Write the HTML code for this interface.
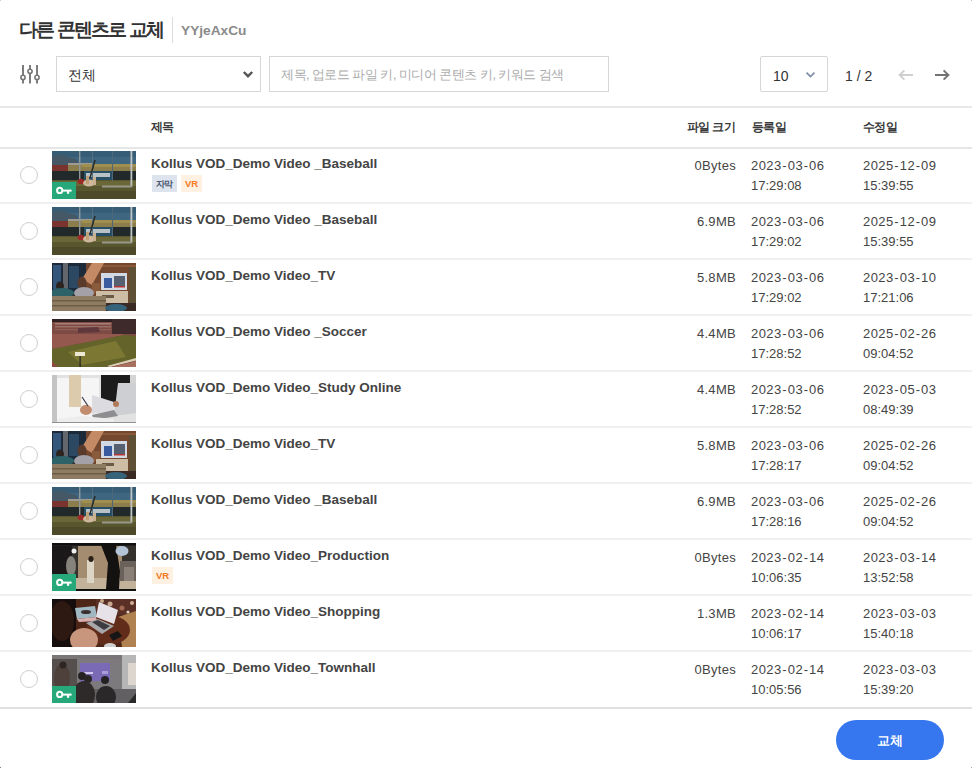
<!DOCTYPE html>
<html><head><meta charset="utf-8">
<style>
*{box-sizing:border-box;margin:0;padding:0}
html,body{width:972px;height:768px;overflow:hidden;background:#fff;font-family:"Liberation Sans",sans-serif;color:#333}
.a{position:absolute;white-space:nowrap}
.box{position:absolute;border:1px solid #dadada;background:#fff;border-radius:2px}
.hl{position:absolute;left:0;width:972px}
.th{position:absolute;top:120px;font-size:12px;line-height:14px;font-weight:bold;color:#3a3a3a;letter-spacing:-0.6px;white-space:nowrap}
.radio{position:absolute;left:20px;width:18px;height:18px;border:1px solid #cfcfcf;border-radius:50%}
.thumb{position:absolute;left:52px;width:84px;height:48px;overflow:hidden}
.thumb svg.ph{display:block;filter:blur(0.6px)}
.key{position:absolute;left:0;top:31px;width:24px;height:17px;background:#27a87a}
.ttl{position:absolute;left:151px;font-size:13.5px;line-height:16px;font-weight:bold;color:#444;white-space:nowrap}
.bd{position:absolute;top:26px;height:16.5px;font-size:9.5px;font-weight:bold;line-height:17px;text-align:center}
.bsub{left:152px;width:25px;background:#dde4ee;color:#4c5870;font-size:9px;line-height:18px;letter-spacing:-1px;text-indent:-1px}
.bvr{width:21px;background:#fff1e2;color:#f57a1e;font-size:9.5px;line-height:18px}
.sz{position:absolute;left:636px;width:100px;text-align:right;letter-spacing:0.3px;font-size:13px;line-height:20px;color:#444}
.dt{position:absolute;font-size:13px;line-height:20px;color:#444;white-space:nowrap}
.dt i{font-style:normal;padding:0 0.6px}
.dt b{font-weight:normal;letter-spacing:0.45px}
.rb{position:absolute;left:0;width:972px;height:2px;background:#f0f0f0}
</style></head>
<body>


<div class="a" style="left:19px;top:19px;font-size:19px;line-height:22px;font-weight:bold;color:#333;letter-spacing:-1.8px">다른 콘텐츠로 교체</div>
<div class="a" style="left:172px;top:17px;width:1px;height:26px;background:#dcdcdc"></div>
<div class="a" style="left:181px;top:22.5px;font-size:13.7px;line-height:16px;font-weight:bold;color:#8a8a8a">YYjeAxCu</div>

<svg class="a" style="left:20px;top:64px" width="22" height="21" viewBox="0 0 22 21">
 <g stroke="#777" fill="#fff">
  <line x1="3" y1="1" x2="3" y2="19.5" stroke-width="1.9"/><line x1="10" y1="1" x2="10" y2="19.5" stroke-width="1.9"/><line x1="17" y1="1" x2="17" y2="19.5" stroke-width="1.9"/>
  <circle cx="3" cy="13.4" r="2.1" stroke-width="1.6"/><circle cx="10" cy="7.3" r="2.1" stroke-width="1.6"/><circle cx="17" cy="13.4" r="2.1" stroke-width="1.6"/>
 </g>
</svg>
<div class="box" style="left:56px;top:56px;width:205px;height:36px;border-radius:0;border-color:#d6d6d6"></div>
<div class="a" style="left:68px;top:68px;font-size:13.5px;line-height:16px;color:#333">전체</div>
<svg class="a" style="left:242px;top:70px" width="12" height="9" viewBox="0 0 12 9"><path d="M1.8 2 L6 6.2 L10.2 2" stroke="#555" stroke-width="2.4" fill="none"/></svg>

<div class="box" style="left:269px;top:56px;width:340px;height:36px;border-radius:0;border-color:#d6d6d6"></div>
<div class="a" style="left:281px;top:67.5px;font-size:12.6px;line-height:14px;color:#aaa;letter-spacing:-0.5px">제목, 업로드 파일 키, 미디어 콘텐츠 키, 키워드 검색</div>

<div class="box" style="left:760px;top:56px;width:68px;height:36px;border-color:#d6d6d6"></div>
<div class="a" style="left:773px;top:67.5px;font-size:14px;line-height:16px;color:#333">10</div>
<svg class="a" style="left:805px;top:70px" width="11" height="9" viewBox="0 0 11 9"><path d="M1.5 2.6 L5.5 6.6 L9.5 2.6" stroke="#8090a6" stroke-width="1.8" fill="none"/></svg>
<div class="a" style="left:845px;top:68px;font-size:14px;line-height:16px;color:#333">1 / 2</div>
<svg class="a" style="left:897px;top:67.5px" width="18" height="14" viewBox="0 0 18 14"><path d="M16 7 H2.6 M7.4 2.4 L2.6 7 L7.4 11.6" stroke="#cfcfcf" stroke-width="1.9" fill="none"/></svg>
<svg class="a" style="left:933px;top:67.5px" width="18" height="14" viewBox="0 0 18 14"><path d="M2 7 H15.4 M10.6 2.4 L15.4 7 L10.6 11.6" stroke="#727272" stroke-width="1.9" fill="none"/></svg>

<div class="hl" style="top:106px;height:2px;background:#e8e8e8"></div>

<div class="th" style="left:151px">제목</div>
<div class="th" style="left:635px;width:100px;text-align:right">파일 크기</div>
<div class="th" style="left:752px">등록일</div>
<div class="th" style="left:863px">수정일</div>
<div class="hl" style="top:147px;height:2px;background:#e6e6e6"></div>

<div class="a" style="left:0;top:149px;width:972px;height:56px">
<div class="radio" style="top:17px"></div>
<div class="thumb" style="top:2px"><svg class="ph" width="84" height="48" viewBox="0 0 84 48">
<rect width="84" height="48" fill="#3f6680"/>
<rect y="0" width="84" height="6" fill="#375c76"/>
<polygon points="0,5 8,4 24,8 28,14 0,14" fill="#465866"/>
<rect x="0" y="14" width="16" height="7" fill="#7a3430"/>
<rect x="16" y="12" width="26" height="3" fill="#9c9c94"/>
<rect x="16" y="14" width="68" height="7" fill="#8c7e4c"/>
<rect x="30" y="13" width="54" height="3" fill="#a09050"/>
<rect x="0" y="20" width="84" height="10" fill="#22292a"/>
<rect x="32" y="20" width="28" height="9" fill="#274f66"/>
<rect x="34" y="22" width="24" height="4" fill="#b8c2c6"/>
<rect x="0" y="29" width="84" height="19" fill="#57562e"/>
<rect x="0" y="30" width="84" height="5" fill="#6a6838"/>
<rect x="0" y="40" width="84" height="8" fill="#4c4a28"/>
<rect x="78.5" y="0" width="1.8" height="36" fill="#c0c4c4"/>
<rect x="27" y="0" width="1.4" height="30" fill="#8e9898"/>
<rect x="40" y="0" width="1" height="30" fill="#567080"/>
<rect x="60" y="0" width="1" height="30" fill="#4e6878"/>
<rect x="50" y="34.5" width="30" height="2" fill="#98988c"/>
<line x1="43" y1="9" x2="38" y2="27" stroke="#2a2a2a" stroke-width="1.5"/>
<ellipse cx="29" cy="30.5" rx="3.4" ry="2.8" fill="#9a2c28"/>
<ellipse cx="37" cy="32" rx="6" ry="3.5" fill="#cdb89c"/>
<rect x="34" y="25" width="3" height="8" fill="#c0a078"/>
<rect x="41" y="26" width="3" height="8" fill="#c8b090"/>
</svg><div class="key"><svg width="24" height="17" viewBox="0 0 24 17" style="position:absolute;left:0;top:0"><circle cx="7.7" cy="8.4" r="2.6" fill="none" stroke="#fff" stroke-width="2"/><rect x="10" y="7.6" width="9.6" height="2" fill="#fff"/><rect x="15" y="8" width="2.2" height="3.8" fill="#fff"/></svg></div></div>
<div class="ttl" style="top:7px">Kollus VOD_Demo Video _Baseball</div>
<div class="bd bsub">자막</div>
<div class="bd bvr" style="left:181px">VR</div>
<div class="sz" style="top:7px">0Bytes</div>
<div class="dt" style="left:751px;top:7px"><b>2023<i>-</i>03<i>-</i>06</b><br>17:29:08</div>
<div class="dt" style="left:863px;top:7px"><b>2025<i>-</i>12<i>-</i>09</b><br>15:39:55</div>
</div>
<div class="rb" style="top:202px"></div>
<div class="a" style="left:0;top:205px;width:972px;height:56px">
<div class="radio" style="top:17px"></div>
<div class="thumb" style="top:2px"><svg class="ph" width="84" height="48" viewBox="0 0 84 48">
<rect width="84" height="48" fill="#3f6680"/>
<rect y="0" width="84" height="6" fill="#375c76"/>
<polygon points="0,5 8,4 24,8 28,14 0,14" fill="#465866"/>
<rect x="0" y="14" width="16" height="7" fill="#7a3430"/>
<rect x="16" y="12" width="26" height="3" fill="#9c9c94"/>
<rect x="16" y="14" width="68" height="7" fill="#8c7e4c"/>
<rect x="30" y="13" width="54" height="3" fill="#a09050"/>
<rect x="0" y="20" width="84" height="10" fill="#22292a"/>
<rect x="32" y="20" width="28" height="9" fill="#274f66"/>
<rect x="34" y="22" width="24" height="4" fill="#b8c2c6"/>
<rect x="0" y="29" width="84" height="19" fill="#57562e"/>
<rect x="0" y="30" width="84" height="5" fill="#6a6838"/>
<rect x="0" y="40" width="84" height="8" fill="#4c4a28"/>
<rect x="78.5" y="0" width="1.8" height="36" fill="#c0c4c4"/>
<rect x="27" y="0" width="1.4" height="30" fill="#8e9898"/>
<rect x="40" y="0" width="1" height="30" fill="#567080"/>
<rect x="60" y="0" width="1" height="30" fill="#4e6878"/>
<rect x="50" y="34.5" width="30" height="2" fill="#98988c"/>
<line x1="43" y1="9" x2="38" y2="27" stroke="#2a2a2a" stroke-width="1.5"/>
<ellipse cx="29" cy="30.5" rx="3.4" ry="2.8" fill="#9a2c28"/>
<ellipse cx="37" cy="32" rx="6" ry="3.5" fill="#cdb89c"/>
<rect x="34" y="25" width="3" height="8" fill="#c0a078"/>
<rect x="41" y="26" width="3" height="8" fill="#c8b090"/>
</svg></div>
<div class="ttl" style="top:7px">Kollus VOD_Demo Video _Baseball</div>
<div class="sz" style="top:7px">6.9MB</div>
<div class="dt" style="left:751px;top:7px"><b>2023<i>-</i>03<i>-</i>06</b><br>17:29:02</div>
<div class="dt" style="left:863px;top:7px"><b>2025<i>-</i>12<i>-</i>09</b><br>15:39:55</div>
</div>
<div class="rb" style="top:258px"></div>
<div class="a" style="left:0;top:261px;width:972px;height:56px">
<div class="radio" style="top:17px"></div>
<div class="thumb" style="top:2px"><svg class="ph" width="84" height="48" viewBox="0 0 84 48">
<rect width="84" height="48" fill="#3a2a24"/>
<rect x="0" y="0" width="36" height="32" fill="#1c2a3a"/>
<rect x="1" y="2" width="8" height="24" fill="#34567a"/>
<rect x="17" y="3" width="10" height="22" fill="#2c4862"/>
<rect x="11" y="0" width="5" height="30" fill="#64666e"/>
<rect x="34" y="0" width="50" height="40" fill="#74482e"/>
<rect x="40" y="2" width="44" height="2" fill="#8a5a38"/>
<polygon points="30,16 40,0 52,0 40,22" fill="#c48a66"/>
<rect x="40" y="20" width="8" height="10" fill="#8a5a3c"/>
<rect x="77" y="4" width="7" height="36" fill="#5e5034"/>
<rect x="49" y="10" width="26" height="17" fill="#d2d8e4"/>
<rect x="52" y="15" width="8" height="10" fill="#3a5aa0"/>
<rect x="62" y="13" width="11" height="10" fill="#566070"/>
<rect x="62" y="23" width="11" height="1.5" fill="#b83434"/>
<rect x="44" y="28" width="32" height="12" fill="#cdbda4"/>
<rect x="50" y="32" width="12" height="3" fill="#6a5a48"/>
<ellipse cx="8" cy="23" rx="4" ry="4.5" fill="#2c2420"/>
<ellipse cx="10" cy="30" rx="12" ry="5" fill="#2c6268"/>
<ellipse cx="30" cy="20" rx="4.5" ry="6.5" fill="#5a3a2a"/>
<ellipse cx="32" cy="30" rx="10" ry="6" fill="#a4a2a8"/>
<rect x="0" y="33" width="54" height="15" fill="#8e7c62"/>
<rect x="0" y="37" width="54" height="1.5" fill="#6e5c46"/>
<rect x="0" y="42" width="54" height="1.5" fill="#6e5c46"/>
<ellipse cx="64" cy="45" rx="11" ry="4" fill="#36627a"/>
</svg></div>
<div class="ttl" style="top:7px">Kollus VOD_Demo Video_TV</div>
<div class="sz" style="top:7px">5.8MB</div>
<div class="dt" style="left:751px;top:7px"><b>2023<i>-</i>03<i>-</i>06</b><br>17:29:02</div>
<div class="dt" style="left:863px;top:7px"><b>2023<i>-</i>03<i>-</i>10</b><br>17:21:06</div>
</div>
<div class="rb" style="top:314px"></div>
<div class="a" style="left:0;top:317px;width:972px;height:56px">
<div class="radio" style="top:17px"></div>
<div class="thumb" style="top:2px"><svg class="ph" width="84" height="48" viewBox="0 0 84 48">
<rect width="84" height="48" fill="#7e4a44"/>
<rect x="0" y="0" width="84" height="3" fill="#2e2020"/>
<rect x="3" y="4" width="56" height="1.5" fill="#a88078"/>
<rect x="3" y="7" width="56" height="1.5" fill="#9a6e64"/>
<rect x="3" y="10" width="56" height="1.2" fill="#8e625a"/>
<rect x="60" y="0" width="24" height="15" fill="#3e2a2a"/>
<polygon points="26,9 46,8 48,13 26,14" fill="#5e383c"/>
<polygon points="0,15 70,15 72,16 0,30" fill="#94584e"/>
<polygon points="0,30 72,16 84,17 84,40 55,48 0,48" fill="#64642a"/>
<polygon points="16,33 64,22 74,38 30,46" fill="#7c7834"/>
<polygon points="0,42 6,48 0,48" fill="#8a4a40"/>
<rect x="23" y="33" width="10" height="4" fill="#ece8d4"/>
<rect x="27.5" y="37" width="1.2" height="11" fill="#222"/>
<polygon points="55,47 84,39 84,41.5 58,48" fill="#ddd2b8"/>
<polygon points="60,48 84,42 84,48" fill="#a8705e"/>
</svg></div>
<div class="ttl" style="top:7px">Kollus VOD_Demo Video _Soccer</div>
<div class="sz" style="top:7px">4.4MB</div>
<div class="dt" style="left:751px;top:7px"><b>2023<i>-</i>03<i>-</i>06</b><br>17:28:52</div>
<div class="dt" style="left:863px;top:7px"><b>2025<i>-</i>02<i>-</i>26</b><br>09:04:52</div>
</div>
<div class="rb" style="top:370px"></div>
<div class="a" style="left:0;top:373px;width:972px;height:56px">
<div class="radio" style="top:17px"></div>
<div class="thumb" style="top:2px"><svg class="ph" width="84" height="48" viewBox="0 0 84 48">
<rect width="84" height="48" fill="#e2e2e2"/>
<rect x="0" y="0" width="5" height="48" fill="#c4c4c4"/>
<rect x="5" y="3" width="42" height="45" fill="#f5f5f6"/>
<rect x="17" y="0" width="12" height="32" fill="#ddcbae"/>
<rect x="49" y="0" width="29" height="27" fill="#1c1c1c"/>
<rect x="78" y="0" width="6" height="12" fill="#d4d4d4"/>
<polygon points="40,20 62,27 62,36 40,39" fill="#dcdce0"/>
<polygon points="66,8 84,8 84,38 62,41" fill="#cdcfd2"/>
<polygon points="40,40 62,35 66,41 42,45" fill="#8e8e90"/>
<ellipse cx="34" cy="35" rx="6" ry="5" fill="#c28c6e"/>
<ellipse cx="64" cy="29" rx="3" ry="3" fill="#b07a5a"/>
<line x1="30" y1="22" x2="36" y2="31" stroke="#3a3a48" stroke-width="1.2"/>
<polygon points="5,44 30,41 62,44 62,48 5,48" fill="#ededee"/>
<rect x="0" y="47" width="84" height="1" fill="#909090"/>
</svg></div>
<div class="ttl" style="top:7px">Kollus VOD_Demo Video_Study Online</div>
<div class="sz" style="top:7px">4.4MB</div>
<div class="dt" style="left:751px;top:7px"><b>2023<i>-</i>03<i>-</i>06</b><br>17:28:52</div>
<div class="dt" style="left:863px;top:7px"><b>2023<i>-</i>05<i>-</i>03</b><br>08:49:39</div>
</div>
<div class="rb" style="top:426px"></div>
<div class="a" style="left:0;top:429px;width:972px;height:56px">
<div class="radio" style="top:17px"></div>
<div class="thumb" style="top:2px"><svg class="ph" width="84" height="48" viewBox="0 0 84 48">
<rect width="84" height="48" fill="#3a2a24"/>
<rect x="0" y="0" width="36" height="32" fill="#1c2a3a"/>
<rect x="1" y="2" width="8" height="24" fill="#34567a"/>
<rect x="17" y="3" width="10" height="22" fill="#2c4862"/>
<rect x="11" y="0" width="5" height="30" fill="#64666e"/>
<rect x="34" y="0" width="50" height="40" fill="#74482e"/>
<rect x="40" y="2" width="44" height="2" fill="#8a5a38"/>
<polygon points="30,16 40,0 52,0 40,22" fill="#c48a66"/>
<rect x="40" y="20" width="8" height="10" fill="#8a5a3c"/>
<rect x="77" y="4" width="7" height="36" fill="#5e5034"/>
<rect x="49" y="10" width="26" height="17" fill="#d2d8e4"/>
<rect x="52" y="15" width="8" height="10" fill="#3a5aa0"/>
<rect x="62" y="13" width="11" height="10" fill="#566070"/>
<rect x="62" y="23" width="11" height="1.5" fill="#b83434"/>
<rect x="44" y="28" width="32" height="12" fill="#cdbda4"/>
<rect x="50" y="32" width="12" height="3" fill="#6a5a48"/>
<ellipse cx="8" cy="23" rx="4" ry="4.5" fill="#2c2420"/>
<ellipse cx="10" cy="30" rx="12" ry="5" fill="#2c6268"/>
<ellipse cx="30" cy="20" rx="4.5" ry="6.5" fill="#5a3a2a"/>
<ellipse cx="32" cy="30" rx="10" ry="6" fill="#a4a2a8"/>
<rect x="0" y="33" width="54" height="15" fill="#8e7c62"/>
<rect x="0" y="37" width="54" height="1.5" fill="#6e5c46"/>
<rect x="0" y="42" width="54" height="1.5" fill="#6e5c46"/>
<ellipse cx="64" cy="45" rx="11" ry="4" fill="#36627a"/>
</svg></div>
<div class="ttl" style="top:7px">Kollus VOD_Demo Video_TV</div>
<div class="sz" style="top:7px">5.8MB</div>
<div class="dt" style="left:751px;top:7px"><b>2023<i>-</i>03<i>-</i>06</b><br>17:28:17</div>
<div class="dt" style="left:863px;top:7px"><b>2025<i>-</i>02<i>-</i>26</b><br>09:04:52</div>
</div>
<div class="rb" style="top:482px"></div>
<div class="a" style="left:0;top:485px;width:972px;height:56px">
<div class="radio" style="top:17px"></div>
<div class="thumb" style="top:2px"><svg class="ph" width="84" height="48" viewBox="0 0 84 48">
<rect width="84" height="48" fill="#3f6680"/>
<rect y="0" width="84" height="6" fill="#375c76"/>
<polygon points="0,5 8,4 24,8 28,14 0,14" fill="#465866"/>
<rect x="0" y="14" width="16" height="7" fill="#7a3430"/>
<rect x="16" y="12" width="26" height="3" fill="#9c9c94"/>
<rect x="16" y="14" width="68" height="7" fill="#8c7e4c"/>
<rect x="30" y="13" width="54" height="3" fill="#a09050"/>
<rect x="0" y="20" width="84" height="10" fill="#22292a"/>
<rect x="32" y="20" width="28" height="9" fill="#274f66"/>
<rect x="34" y="22" width="24" height="4" fill="#b8c2c6"/>
<rect x="0" y="29" width="84" height="19" fill="#57562e"/>
<rect x="0" y="30" width="84" height="5" fill="#6a6838"/>
<rect x="0" y="40" width="84" height="8" fill="#4c4a28"/>
<rect x="78.5" y="0" width="1.8" height="36" fill="#c0c4c4"/>
<rect x="27" y="0" width="1.4" height="30" fill="#8e9898"/>
<rect x="40" y="0" width="1" height="30" fill="#567080"/>
<rect x="60" y="0" width="1" height="30" fill="#4e6878"/>
<rect x="50" y="34.5" width="30" height="2" fill="#98988c"/>
<line x1="43" y1="9" x2="38" y2="27" stroke="#2a2a2a" stroke-width="1.5"/>
<ellipse cx="29" cy="30.5" rx="3.4" ry="2.8" fill="#9a2c28"/>
<ellipse cx="37" cy="32" rx="6" ry="3.5" fill="#cdb89c"/>
<rect x="34" y="25" width="3" height="8" fill="#c0a078"/>
<rect x="41" y="26" width="3" height="8" fill="#c8b090"/>
</svg></div>
<div class="ttl" style="top:7px">Kollus VOD_Demo Video _Baseball</div>
<div class="sz" style="top:7px">6.9MB</div>
<div class="dt" style="left:751px;top:7px"><b>2023<i>-</i>03<i>-</i>06</b><br>17:28:16</div>
<div class="dt" style="left:863px;top:7px"><b>2025<i>-</i>02<i>-</i>26</b><br>09:04:52</div>
</div>
<div class="rb" style="top:538px"></div>
<div class="a" style="left:0;top:541px;width:972px;height:56px">
<div class="radio" style="top:17px"></div>
<div class="thumb" style="top:2px"><svg class="ph" width="84" height="48" viewBox="0 0 84 48">
<rect width="84" height="48" fill="#34302c"/>
<rect x="26" y="3" width="44" height="34" fill="#a48c70"/>
<rect x="0" y="35" width="84" height="11" fill="#c2b29a"/>
<rect x="0" y="0" width="84" height="2.5" fill="#101010"/>
<rect x="0" y="46" width="84" height="2" fill="#101010"/>
<rect x="0" y="3" width="20" height="31" fill="#1a1818"/>
<ellipse cx="19" cy="23" rx="5" ry="10" fill="#86827c"/>
<circle cx="22" cy="8" r="2.5" fill="#f0f0f0"/>
<rect x="35" y="17" width="7" height="23" fill="#dcd4c4"/>
<ellipse cx="39" cy="16" rx="2.6" ry="3" fill="#2a2018"/>
<polygon points="49,2 64,2 68,28 67,46 54,46 56,20" fill="#141210"/>
<ellipse cx="70" cy="8" rx="6.5" ry="5" fill="#b4c4d6"/>
<rect x="68" y="18" width="16" height="20" fill="#6a625a"/>
<rect x="72" y="24" width="10" height="14" fill="#8a8078"/>
</svg><div class="key"><svg width="24" height="17" viewBox="0 0 24 17" style="position:absolute;left:0;top:0"><circle cx="7.7" cy="8.4" r="2.6" fill="none" stroke="#fff" stroke-width="2"/><rect x="10" y="7.6" width="9.6" height="2" fill="#fff"/><rect x="15" y="8" width="2.2" height="3.8" fill="#fff"/></svg></div></div>
<div class="ttl" style="top:7px">Kollus VOD_Demo Video_Production</div>
<div class="bd bvr" style="left:152px">VR</div>
<div class="sz" style="top:7px">0Bytes</div>
<div class="dt" style="left:751px;top:7px"><b>2023<i>-</i>02<i>-</i>14</b><br>10:06:35</div>
<div class="dt" style="left:863px;top:7px"><b>2023<i>-</i>03<i>-</i>14</b><br>13:52:58</div>
</div>
<div class="rb" style="top:594px"></div>
<div class="a" style="left:0;top:597px;width:972px;height:56px">
<div class="radio" style="top:17px"></div>
<div class="thumb" style="top:2px"><svg class="ph" width="84" height="48" viewBox="0 0 84 48">
<rect width="84" height="48" fill="#4e2618"/>
<rect x="0" y="0" width="24" height="48" fill="#160e0c"/>
<ellipse cx="10" cy="22" rx="12" ry="20" fill="#2e1812"/>
<rect x="44" y="0" width="40" height="16" fill="#5a3026"/>
<circle cx="58" cy="5" r="2.5" fill="#c8a890"/><circle cx="70" cy="9" r="2.5" fill="#a06a52"/><circle cx="80" cy="4" r="2" fill="#d0b098"/><circle cx="50" cy="2" r="2" fill="#c8a888"/><circle cx="76" cy="13" r="1.6" fill="#e0d0c0"/>
<polygon points="66,18 84,12 84,48 70,48" fill="#b08252"/>
<ellipse cx="56" cy="31" rx="22" ry="15" fill="#622c1a"/>
<ellipse cx="32" cy="41" rx="14" ry="12" fill="#c8967c"/>
<polygon points="23,9 43,7 45,18 25,20" fill="#a0b8c2"/>
<ellipse cx="34" cy="13" rx="5" ry="2" fill="#3a3030"/>
<polygon points="25,20 44,18 45,22 27,23" fill="#d8b0b0"/>
<polygon points="47,3 66,11 62,25 44,18" fill="#e6e2e8"/>
<polygon points="34,24 46,20 62,27 50,35" fill="#a8a8aa"/>
<polygon points="40,23 46,21 58,27 52,31" fill="#3c3c40"/>
<polygon points="57,36 66,32 70,37 61,42" fill="#161616"/>
<ellipse cx="58" cy="47" rx="6" ry="3" fill="#d0d0d0"/>
</svg></div>
<div class="ttl" style="top:7px">Kollus VOD_Demo Video_Shopping</div>
<div class="sz" style="top:7px">1.3MB</div>
<div class="dt" style="left:751px;top:7px"><b>2023<i>-</i>02<i>-</i>14</b><br>10:06:17</div>
<div class="dt" style="left:863px;top:7px"><b>2023<i>-</i>03<i>-</i>03</b><br>15:40:18</div>
</div>
<div class="rb" style="top:650px"></div>
<div class="a" style="left:0;top:653px;width:972px;height:56px">
<div class="radio" style="top:17px"></div>
<div class="thumb" style="top:2px"><svg class="ph" width="84" height="48" viewBox="0 0 84 48">
<rect width="84" height="48" fill="#5a5658"/>
<rect x="0" y="0" width="84" height="4" fill="#7a7678"/>
<rect x="0" y="4" width="25" height="30" fill="#55504e"/>
<rect x="25" y="4" width="46" height="30" fill="#7c7a7c"/>
<rect x="28" y="8" width="30" height="18" fill="#7a6ab6"/>
<rect x="31" y="17" width="10" height="2" fill="#d0c8ec"/>
<rect x="50" y="16" width="6" height="3" fill="#a89cd8"/>
<rect x="70" y="0" width="14" height="35" fill="#b6b6b6"/>
<rect x="76" y="8" width="8" height="22" fill="#ddd6ce"/>
<rect x="0" y="34" width="84" height="14" fill="#626062"/>
<ellipse cx="10" cy="23" rx="8" ry="14" fill="#4e403a"/>
<circle cx="11" cy="10" r="3.5" fill="#2e2622"/>
<circle cx="30" cy="21" r="4" fill="#262222"/>
<circle cx="36" cy="24" r="4" fill="#2a2626"/>
<circle cx="53" cy="25" r="4" fill="#222"/>
<ellipse cx="32" cy="40" rx="11" ry="14" fill="#2e2a2a"/>
<ellipse cx="54" cy="42" rx="10" ry="11" fill="#2a2828"/>
<polygon points="76,48 84,38 84,48" fill="#2a2a2a"/>
</svg><div class="key"><svg width="24" height="17" viewBox="0 0 24 17" style="position:absolute;left:0;top:0"><circle cx="7.7" cy="8.4" r="2.6" fill="none" stroke="#fff" stroke-width="2"/><rect x="10" y="7.6" width="9.6" height="2" fill="#fff"/><rect x="15" y="8" width="2.2" height="3.8" fill="#fff"/></svg></div></div>
<div class="ttl" style="top:7px">Kollus VOD_Demo Video_Townhall</div>
<div class="sz" style="top:7px">0Bytes</div>
<div class="dt" style="left:751px;top:7px"><b>2023<i>-</i>02<i>-</i>14</b><br>10:05:56</div>
<div class="dt" style="left:863px;top:7px"><b>2023<i>-</i>03<i>-</i>03</b><br>15:39:20</div>
</div>

<div class="hl" style="top:707px;height:2px;background:#e0e0e0"></div>
<div class="a" style="left:836px;top:720px;width:108px;height:40px;border-radius:20px;background:#3677ef;color:#fff;font-size:12.5px;font-weight:bold;text-align:center;line-height:43px">교체</div>
<div class="a" style="left:0;top:0;width:1px;height:1px;background:#d0d0d0"></div>
<div class="a" style="left:971px;top:0;width:1px;height:1px;background:#c4c4c4"></div>
<div class="a" style="left:0;top:767px;width:1px;height:1px;background:#808080"></div>
<div class="a" style="left:971px;top:767px;width:1px;height:1px;background:#a0a0a0"></div>
</body></html>
